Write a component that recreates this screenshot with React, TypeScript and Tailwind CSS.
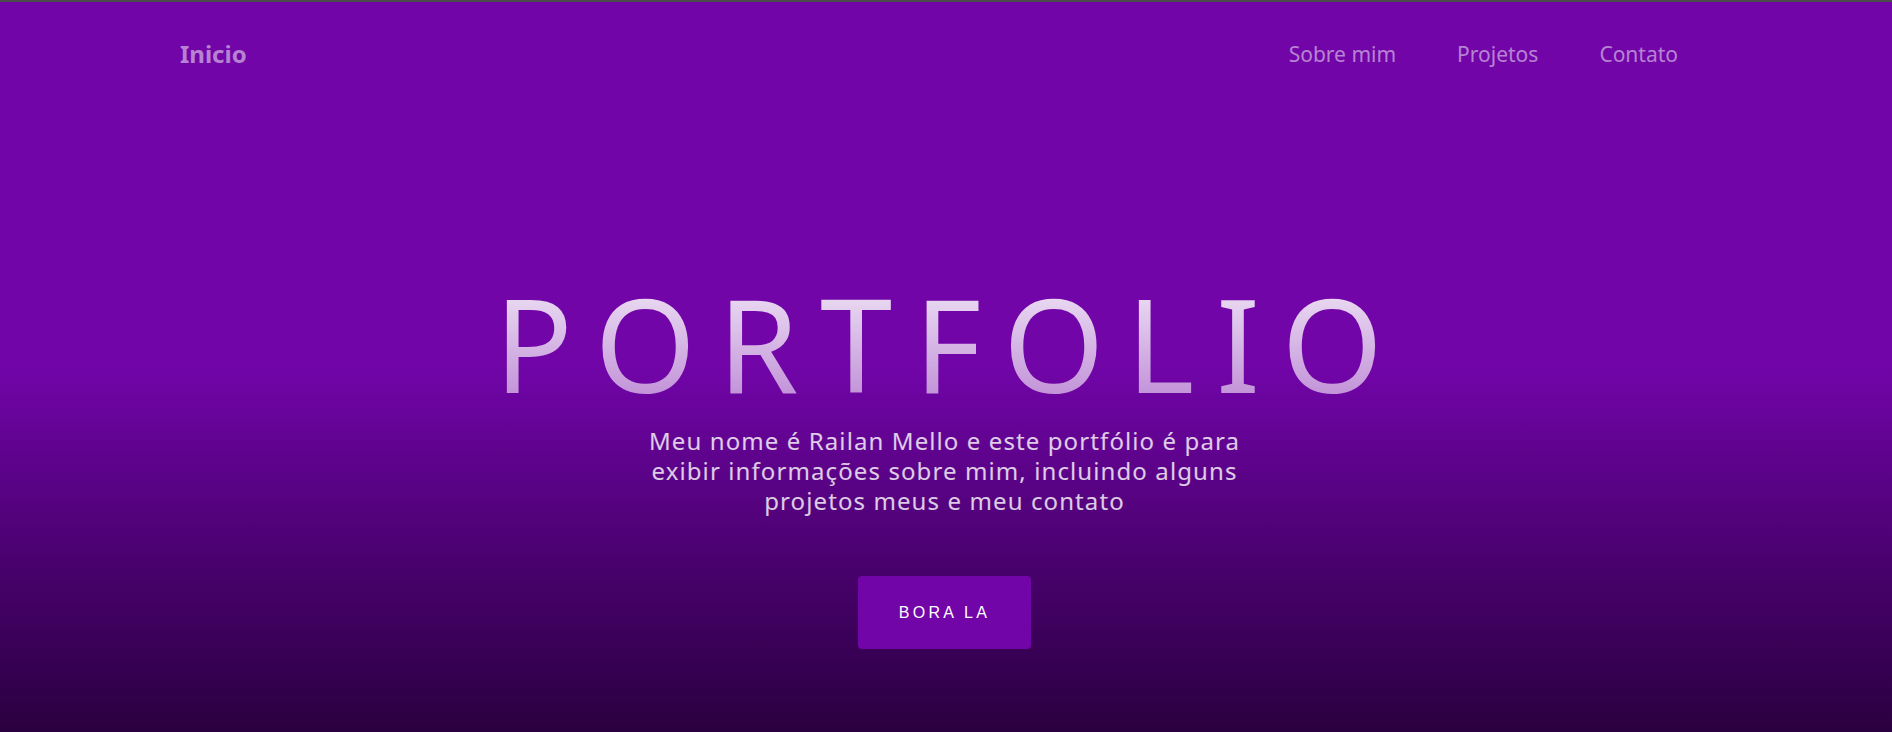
export default function App() {
  const links = ["Sobre mim", "Projetos", "Contato"];

  return (
    <div className="min-h-[732px] border-t-2 border-[#4b4b4b] bg-gradient-to-b from-[#7105a8] from-50% to-[#2a0040] font-['Noto_Sans',sans-serif]">
      <nav className="flex h-[104px] items-center justify-between pl-[180px] pr-[214px]">
        <a className="text-[24px] font-bold leading-8 text-white/50">Inicio</a>
        <ul className="flex gap-[61px]">
          {links.map((label) => (
            <li key={label} className="text-[21px] leading-7 text-white/50">
              {label}
            </li>
          ))}
        </ul>
      </nav>

      <main className="flex flex-col items-center pt-[172px] pr-[3px] pb-[83px] text-center">
        <h1 className="bg-gradient-to-b from-[#f0e5f5] to-[#bd8ad5] bg-clip-text pl-[10px] text-[130px] leading-none font-normal tracking-[21.6px] text-transparent">
          PORTFOLIO
        </h1>
        <p className="mt-[18px] w-[630px] text-[24px] leading-[30px] tracking-[1.1px] text-white/80">
          Meu nome é Railan Mello e este portfólio é para exibir informações
          sobre mim, incluindo alguns projetos meus e meu contato
        </p>
        <button className="mt-[60px] h-[73px] w-[173px] rounded-[4px] bg-[#7105a8] font-['Liberation_Sans',sans-serif] text-[16px] tracking-[3.3px] text-white">
          BORA LA
        </button>
      </main>
    </div>
  );
}
